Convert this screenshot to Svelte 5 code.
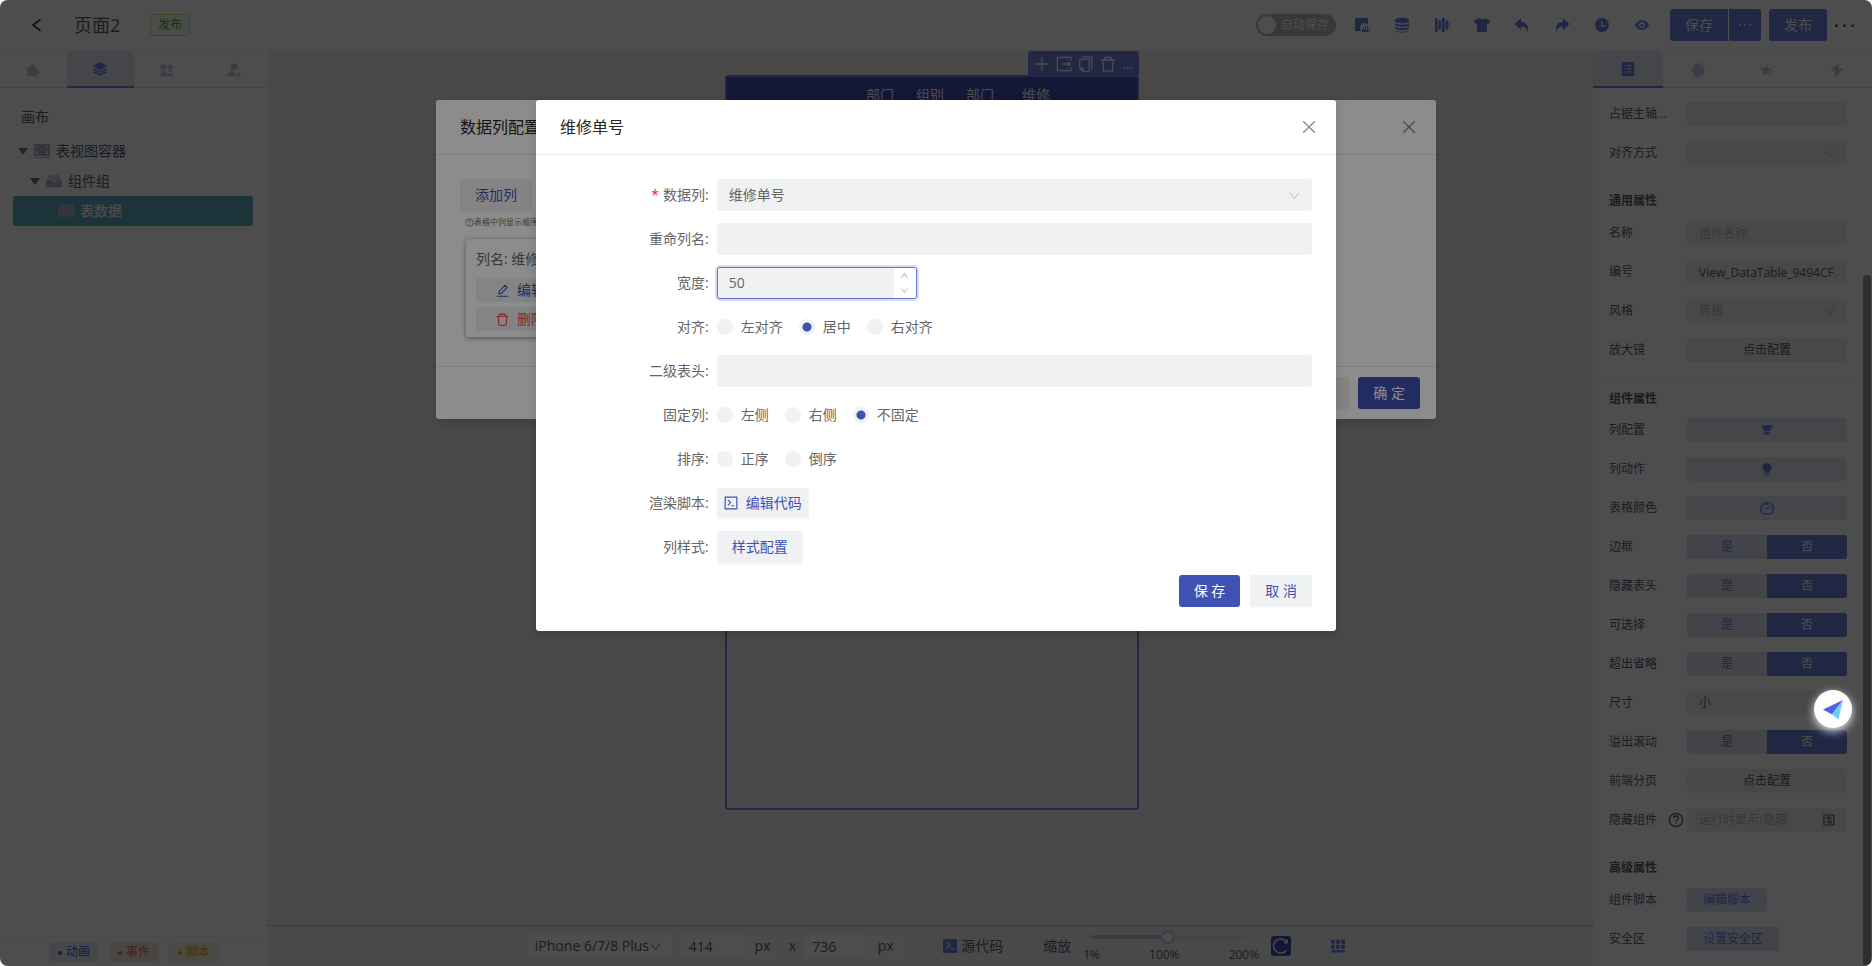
<script lang="ts">
  type Field = {
    id: string;
    label: string;
    kind: "text" | "select" | "config" | "icon" | "toggle" | "script" | "link";
    value?: string;
    placeholder?: string;
    icon?: string;
    help?: boolean;
  };

  const toolbarIcons = [
    { name: "page", title: "页面" },
    { name: "database", title: "数据源" },
    { name: "bars", title: "变量" },
    { name: "shirt", title: "主题" },
    { name: "undo", title: "撤销" },
    { name: "redo", title: "重做" },
    { name: "clock", title: "历史" },
    { name: "eye", title: "预览" },
  ];

  const layoutFields: Field[] = [
    { id: "grow", label: "占据主轴...", kind: "text", value: "" },
    { id: "align-self", label: "对齐方式", kind: "select", value: "" },
  ];

  const commonFields: Field[] = [
    { id: "name", label: "名称", kind: "text", value: "", placeholder: "组件名称" },
    { id: "code", label: "编号", kind: "text", value: "View_DataTable_9494CFBC" },
    { id: "theme", label: "风格", kind: "select", value: "", placeholder: "风格" },
    { id: "zoom", label: "放大镜", kind: "config", value: "点击配置" },
  ];

  const componentFields: Field[] = [
    { id: "columns", label: "列配置", kind: "icon", icon: "funnel" },
    { id: "actions", label: "列动作", kind: "icon", icon: "bulb" },
    { id: "colors", label: "表格颜色", kind: "icon", icon: "gauge" },
    { id: "border", label: "边框", kind: "toggle" },
    { id: "hide-head", label: "隐藏表头", kind: "toggle" },
    { id: "selectable", label: "可选择", kind: "toggle" },
    { id: "ellipsis", label: "超出省略", kind: "toggle" },
    { id: "size", label: "尺寸", kind: "select", value: "小" },
    { id: "scroll", label: "溢出滚动", kind: "toggle" },
    { id: "paging", label: "前端分页", kind: "config", value: "点击配置" },
    { id: "hidden", label: "隐藏组件", kind: "script", value: "", placeholder: "运行时显示/隐藏", help: true },
  ];

  const advancedFields: Field[] = [
    { id: "script", label: "组件脚本", kind: "link", value: "编辑脚本" },
    { id: "safe-area", label: "安全区", kind: "link", value: "设置安全区" },
  ];

  const radioRows = {
    align: ["左对齐", "居中", "右对齐"],
    fixed: ["左侧", "右侧", "不固定"],
    sort: ["正序", "倒序"],
  };

  let width = $state(50);
  let scale = $state(100);
  let align = $state("居中");
  let fixed = $state("不固定");
  let sort = $state("");
</script>

{#snippet icon(name: string, size = 18)}
  <svg width={size} height={size} viewBox="0 0 18 18" fill="currentColor" stroke="none" aria-hidden="true">
    {#if name === "page"}
      <path d="M2 2h13v6.500a4 4 0 0 0-6.500 6.500H2z" />
      <path d="M9 16c0-3 1-5 2-5v3h1V9.500h1V14h1v-4h1v4h1v-3c1 1 1 5-1 5z" />
    {:else if name === "database"}
      <path d="M2 4c0-3 14-3 14 0v1c0 3-14 3-14 0zM2 7c2 2.400 12 2.400 14 0v1.500c0 3-14 3-14 0zM2 10.500c2 2.400 12 2.400 14 0V12c0 3-14 3-14 0zM2 14c2 2.400 12 2.400 14 0-1 3.400-13 3.400-14 0z" />
    {:else if name === "bars"}
      <path d="M2 2h2.600v14H2zM5.500 4.500h2.600v9H5.500zM9 2h2.600v14H9zM12.500 4.500h2.600v9h-2.600zM15.500 7h1v4h-1z" />
    {:else if name === "shirt"}
      <path d="M6 2c1 1.800 5 1.800 6 0l5 2.500-1.500 4L14 8v8H4V8l-1.500.5L1 4.500z" />
    {:else if name === "undo"}
      <path d="M8 2v4c6 0 8.500 5 6.500 10C14 12 12 10.500 8 10.500V14L1.500 8z" />
    {:else if name === "redo"}
      <path d="M10 2v4C4 6 1.500 11 3.500 16c.5-4 2.500-5.500 6.500-5.500V14l6.500-6z" />
    {:else if name === "clock"}
      <path fill-rule="evenodd" d="M9 2a7 7 0 1 0 0 14A7 7 0 0 0 9 2zm-1 3h1.500v4.200h3v1.500H8z" />
    {:else if name === "eye"}
      <path fill-rule="evenodd" d="M2 9C5.500 2.500 12.500 2.500 16 9 12.500 15.500 5.500 15.500 2 9zM9 6a3 3 0 1 0 0 6 3 3 0 0 0 0-6z" />
      <circle cx="9" cy="9" r="1.600" />
    {:else if name === "puzzle"}
      <path d="M1 6h4.500a2.900 2.900 0 1 1 5 0H14v3.500a2.400 2.400 0 1 1 0 4.500v3H1v-3.500a2 2 0 1 0 0-4z" />
    {:else if name === "layers"}
      <path d="M9 0l9 5-9 5.500L0 5z" />
      <path fill="none" stroke="currentColor" stroke-width="1.900" d="M.5 8.500L9 13.500l8.500-5M.5 12L9 17l8.500-5" />
    {:else if name === "blocks"}
      <path d="M1 2h7.500v6.500H1zM1 10c4.500 0 7 3.500 16 5v2H1zM9.500 10H17v3.500c-3.500-.6-5.500-1.800-7.500-3.500z" />
      <circle cx="13.300" cy="5.300" r="3.600" />
    {:else if name === "user"}
      <circle cx="9" cy="4.800" r="4.600" />
      <path d="M0 17.500C0 13 2 11 5.500 11h3.500l2 3-2 3.500zM13 11l5 4-2 2.500h-4.500l2-3z" />
    {:else if name === "form"}
      <path fill-rule="evenodd" d="M3 0h12a2 2 0 0 1 2 2v14a2 2 0 0 1-2 2H3a2 2 0 0 1-2-2V2a2 2 0 0 1 2-2zm1.500 4v1.500H6V4zm3 0v1.500h6V4zm-3 4v1.500H6V8zm3 0v1.500h6V8zm-3 4v1.500H6V12zm3 0v1.500h6V12z" />
    {:else if name === "palette"}
      <path d="M3 3l2 1 1-3c3-1 6-1 8 1 2 1.500 3.500 4 3.500 7 0 5-4 9-8.500 9-4 0-6-2-7-4l2-1-3-2c-.5-2 0-3 .5-4l2 0z" />
      <path fill="none" stroke="#fff" stroke-width="1.300" stroke-dasharray="1.300 2" d="M11 3.500c4.500 2 5 8 1 11.500" />
    {:else if name === "star"}
      <path d="M8 1l2.200 5.500H16l-4.500 3.700 1.700 6L8 13l-5.200 3.200 1.700-6L0 6.500h5.800z" />
      <path d="M15.500 3.500H17v2h-1.500zM15 9h2v2h-2zM15.500 14H17v2h-1.500z" />
    {:else if name === "bolt"}
      <path d="M11 0L0 10.500h6.500L6 18 18 7h-7z" />
    {:else if name === "frame"}
      <path fill-rule="evenodd" d="M0 1h18v13.500H0zm2 2v3l3-3zm14 0h-3l3 3zM2 12.500h3l-3-3zm14 0v-3l-3 3zM0 15.800h18V17H0z" />
    {:else if name === "box"}
      <path d="M4 2h10l4 7H0z" opacity=".6" />
      <path fill-rule="evenodd" d="M0 8.500h7c0 3 4 3 4 0h7V16H0z" />
    {:else if name === "funnel"}
      <path d="M0 2h18l-5 9H5zM5 12.500h8V16H5z" />
    {:else if name === "bulb"}
      <path d="M9 0a6.800 6.800 0 0 0-4 12.300V14.500h8v-2.200A6.800 6.800 0 0 0 9 0zM5 16h8v2H5z" />
    {:else if name === "gauge"}
      <path fill="none" stroke="currentColor" stroke-width="1.600" d="M4 16.500a8.200 8.200 0 1 1 10 0zM8.500 10.500l3.500-4M3.500 9.500H5M9 3v2M4.800 5.300l1.200 1M13 9.500h1.500" />
    {:else if name === "calc"}
      <path fill="none" stroke="currentColor" stroke-width="1.800" d="M1.500 1.500h15v15h-15zM4.500 6h4M6.500 4v4M10.500 6H14M4.500 12h4M10.500 10.800H14M10.500 13.500H14M9 3v12" />
    {:else if name === "help"}
      <circle cx="9" cy="9" r="7.500" fill="none" stroke="currentColor" stroke-width="1.500" />
      <path fill="none" stroke="currentColor" stroke-width="1.500" d="M6.500 7c0-3.300 5-3.300 5 0 0 1.700-2.500 1.800-2.500 4M9 12.300v1.600" />
    {:else if name === "down"}
      <path fill="none" stroke="currentColor" stroke-width="1.600" d="M1.500 4l7.500 10L16.500 4" />
    {:else if name === "up"}
      <path fill="none" stroke="currentColor" stroke-width="2" d="M2 14l7-10 7 10" />
    {:else if name === "close"}
      <path fill="none" stroke="currentColor" stroke-width="1.800" d="M1.500 1.500l15 15M16.500 1.500l-15 15" />
    {:else if name === "back"}
      <path fill="none" stroke="currentColor" stroke-width="2.200" d="M13.500 2L4 9l9.500 7.500" />
    {:else if name === "dots"}
      <path d="M0 8h2.500v2.500H0zM7.700 8h2.500v2.500H7.700zM15.500 8H18v2.500h-2.500z" />
    {:else if name === "plus"}
      <path fill="none" stroke="currentColor" stroke-width="1.500" d="M9 1v16M1 9h16" />
    {:else if name === "export"}
      <path fill="none" stroke="currentColor" stroke-width="1.500" d="M17 5V1.500H1.500v15H17V13M7 9h9M13 6.500L16 9l-3 2.500" />
    {:else if name === "copy"}
      <path fill="none" stroke="currentColor" stroke-width="1.400" d="M2 3.500h10.500v14H5.500L2 14zM2 13.500h4v4M5 1h10.500v14" />
    {:else if name === "trash"}
      <path fill="none" stroke="currentColor" stroke-width="1.500" d="M1 4.500h16M5.500 4V1.500h7V4M3 4.500l1 12.500h10l1-12.500" />
    {:else if name === "edit"}
      <path fill="none" stroke="currentColor" stroke-width="1.500" d="M1 17h16M4 13.500l.6-3.500L12.500 1.800l3 3L7.500 13z" />
    {:else if name === "code"}
      <path fill="none" stroke="currentColor" stroke-width="1.500" d="M1.500 1.500h15v15h-15zM5 5l3.500 3.500L5 12M9.500 12.500H13" />
    {:else if name === "terminal"}
      <path fill-rule="evenodd" d="M0 0h18v18H0zm4 4.500L7.500 8 4 11.500l1.300 1.200L10 8 5.300 3.300zM10 12v1.600h5V12z" />
    {:else if name === "grid"}
      <path d="M0 1h5v5H0zM6.500 1h5v5h-5zM13 1h5v5h-5zM0 7.500h5v5H0zM6.500 7.500h5v5h-5zM13 7.500h5v5h-5zM0 14h18v3.500H0z" />
    {:else if name === "refresh"}
      <path fill="none" stroke="currentColor" stroke-width="1.600" d="M15 4.200a8 8 0 1 0 0 9.600M15.800 1.500v3.800H12.500" />
    {/if}
  </svg>
{/snippet}

{#snippet fieldRow(f: Field)}
  <div class="field">
    <div class="field-label">
      {#if f.kind === "text" || f.kind === "select" || f.kind === "script"}
        <label for={f.id}>{f.label}</label>
      {:else}
        <span id="{f.id}-label">{f.label}</span>
      {/if}
      {#if f.help}{@render icon("help", 16)}{/if}
    </div>
    {#if f.kind === "text"}
      <input id={f.id} class="control" type="text" value={f.value} placeholder={f.placeholder} />
    {:else if f.kind === "select"}
      <div class="select">
        <select id={f.id} class="control" class:empty={!f.value}>
          <option>{f.value || f.placeholder || ""}</option>
        </select>
        {@render icon("down", 11)}
      </div>
    {:else if f.kind === "config"}
      <button class="control centered" aria-labelledby="{f.id}-label">{f.value}</button>
    {:else if f.kind === "icon"}
      <button class="control icon-control" aria-labelledby="{f.id}-label">{@render icon(f.icon ?? "", f.icon === "gauge" ? 14 : 12)}</button>
    {:else if f.kind === "toggle"}
      <div class="toggle" role="radiogroup" aria-labelledby="{f.id}-label">
        <label><input type="radio" name={f.id} value="yes" />是</label>
        <label><input type="radio" name={f.id} value="no" checked />否</label>
      </div>
    {:else if f.kind === "script"}
      <div class="control with-suffix">
        <input id={f.id} type="text" placeholder={f.placeholder} />
        {@render icon("calc", 12)}
      </div>
    {:else}
      <button class="control link-control" aria-labelledby="{f.id}-label">{f.value}</button>
    {/if}
  </div>
{/snippet}

<div class="app">
  <header class="topbar">
    <button class="plain back" aria-label="返回">{@render icon("back", 14)}</button>
    <h1>页面2</h1>
    <span class="status">发布</span>
    <div class="tools">
      <label class="switch"><input type="checkbox" /><i></i>自动保存</label>
      <div class="tool-icons">
        {#each toolbarIcons as t}
          <button class="plain" aria-label={t.title}>{@render icon(t.name)}</button>
        {/each}
      </div>
      <div class="split">
        <button class="solid">保存</button>
        <button class="solid more" aria-label="更多保存">{@render icon("dots", 12)}</button>
      </div>
      <button class="solid">发布</button>
      <button class="plain" aria-label="更多">{@render icon("dots", 19)}</button>
    </div>
  </header>

  <div class="workspace">
    <aside class="left">
      <nav class="tabs">
        {#each ["puzzle", "layers", "blocks", "user"] as name, i}
          <button class="tab" class:active={i === 1} aria-label={name}>{@render icon(name, 14)}</button>
        {/each}
      </nav>
      <div class="tree">
        <h2>画布</h2>
        <div class="node"><b class="caret"></b>{@render icon("frame", 16)}<span>表视图容器</span></div>
        <div class="node level-1"><b class="caret"></b>{@render icon("box", 16)}<span>组件组</span></div>
        <div class="node level-2 selected">{@render icon("frame", 16)}<span>表数据</span></div>
      </div>
      <footer class="legend">
        <span class="blue">动画</span>
        <span class="orange">事件</span>
        <span class="yellow">脚本</span>
      </footer>
    </aside>

    <main class="canvas">
      <div class="stage">
        <div class="device">
          <div class="device-tools">
            {#each ["plus", "export", "copy", "trash"] as name}
              <button class="plain" aria-label={name}>{@render icon(name, 16)}</button>
            {/each}
            <button class="plain ellipsis">...</button>
          </div>
          <div class="screen">
            <table>
              <thead>
                <tr><th class="wide"></th><th>部门</th><th>组别</th><th>部门</th><th class="mid">维修</th><th class="rest"></th></tr>
              </thead>
            </table>
          </div>
        </div>
      </div>

      <footer class="viewbar">
        <div class="select device-select">
          <select aria-label="设备"><option>iPhone 6/7/8 Plus</option></select>
          {@render icon("down", 11)}
        </div>
        <label class="size"><input type="text" value="414" /><span>px</span></label>
        <span>x</span>
        <label class="size"><input type="text" value="736" /><span>px</span></label>
        <button class="plain source">{@render icon("terminal", 14)}源代码</button>
        <label class="zoom-label" for="scale">缩放</label>
        <div class="slider">
          <input id="scale" type="range" min="1" max="200" bind:value={scale} />
          <div class="marks"><span>1%</span><span>100%</span><span>200%</span></div>
        </div>
        <button class="reset" aria-label="重置">{@render icon("refresh", 16)}</button>
        <button class="plain grid-button" aria-label="网格">{@render icon("grid", 14)}</button>
      </footer>
    </main>

    <aside class="right">
      <nav class="tabs">
        {#each ["form", "palette", "star", "bolt"] as name, i}
          <button class="tab" class:active={i === 0} aria-label={name}>{@render icon(name, 14)}</button>
        {/each}
      </nav>
      <div class="props">
        <div class="fields">
          {#each layoutFields as f}{@render fieldRow(f)}{/each}
          <h3>通用属性</h3>
          {#each commonFields as f}{@render fieldRow(f)}{/each}
          <h3 class="divided">组件属性</h3>
          {#each componentFields as f}{@render fieldRow(f)}{/each}
          <h3>高级属性</h3>
          {#each advancedFields as f}{@render fieldRow(f)}{/each}
        </div>
        <div class="scrollbar"><i></i></div>
      </div>
    </aside>
  </div>

  <div class="mask">
    <section class="modal list-modal" role="dialog" aria-label="数据列配置">
      <header>
        <h2>数据列配置</h2>
        <button class="plain" aria-label="关闭">{@render icon("close", 14)}</button>
      </header>
      <div class="modal-body">
        <button class="btn">添加列</button>
        <p class="hint">{@render icon("help", 9)}表格中列显示顺序</p>
        <div class="card">
          <p>列名: 维修单号</p>
          <button class="edit">{@render icon("edit", 13)}编辑</button>
          <button class="remove">{@render icon("trash", 13)}删除</button>
        </div>
      </div>
      <footer>
        <button class="btn">取 消</button>
        <button class="btn primary">确 定</button>
      </footer>
    </section>
  </div>

  <div class="mask">
    <section class="modal column-modal" role="dialog" aria-label="维修单号">
      <header>
        <h2>维修单号</h2>
        <button class="plain" aria-label="关闭">{@render icon("close", 14)}</button>
      </header>
      <form class="form">
        <label class="required" for="col-field">数据列:</label>
        <div class="select">
          <select id="col-field" class="input"><option>维修单号</option></select>
          {@render icon("down", 11)}
        </div>

        <label for="col-rename">重命列名:</label>
        <input id="col-rename" class="input" type="text" />

        <label for="col-width">宽度:</label>
        <div class="number">
          <input id="col-width" type="number" bind:value={width} />
          <div class="steps">
            <button type="button" aria-label="增加" onclick={() => (width += 1)}>{@render icon("up", 7)}</button>
            <button type="button" aria-label="减少" onclick={() => (width -= 1)}>{@render icon("down", 7)}</button>
          </div>
        </div>

        <span>对齐:</span>
        <div class="radios">
          {#each radioRows.align as option}
            <label><input type="radio" name="align" value={option} bind:group={align} />{option}</label>
          {/each}
        </div>

        <label for="col-second">二级表头:</label>
        <input id="col-second" class="input" type="text" />

        <span>固定列:</span>
        <div class="radios">
          {#each radioRows.fixed as option}
            <label><input type="radio" name="fixed" value={option} bind:group={fixed} />{option}</label>
          {/each}
        </div>

        <span>排序:</span>
        <div class="radios">
          {#each radioRows.sort as option}
            <label><input type="radio" name="sort" value={option} bind:group={sort} />{option}</label>
          {/each}
        </div>

        <span>渲染脚本:</span>
        <button type="button" class="btn code">{@render icon("code", 14)}编辑代码</button>

        <span>列样式:</span>
        <button type="button" class="btn">样式配置</button>

        <div class="actions">
          <button type="button" class="btn primary">保 存</button>
          <button type="button" class="btn">取 消</button>
        </div>
      </form>
    </section>
  </div>

  <button class="assistant" aria-label="助手">
    <svg width="22" height="22" viewBox="0 0 22 22" aria-hidden="true">
      <path fill="#5262e8" d="M1 11.500L21 2 10 16.500z" />
      <path fill="#6fd0ee" d="M21 2L10 16.500l6.500 5z" />
    </svg>
  </button>
</div>

<style>
:global(body) {
  margin: 0;
  background: #fff;
}

.app {
  --blue: #3f51b5;
  --soft-blue: #6a82e0;
  position: relative;
  display: flex;
  flex-direction: column;
  height: 100vh;
  overflow: hidden;
  border-radius: 8px;
  background: #f5f5f6;
  color: #5c5e72;
  font: 14px/22px "Open Sans", "Noto Sans CJK SC", sans-serif;
}

.app * {
  box-sizing: border-box;
}

button, input, select {
  margin: 0;
  padding: 0;
  border: 0;
  outline: 0;
  background: none;
  color: inherit;
  font: inherit;
}

select {
  appearance: none;
}

h1, h2, h3, p {
  margin: 0;
  font-weight: 400;
}

svg {
  display: block;
  flex: none;
}

.plain {
  display: flex;
  align-items: center;
}

/* top bar */
.topbar {
  display: flex;
  align-items: center;
  flex: none;
  height: 51px;
  padding: 0 18px 0 30px;
  border-bottom: 1px solid #ececee;
  background: #fff;
}

.back {
  color: #33364d;
}

.topbar h1 {
  margin-left: 30px;
  font-size: 18px;
}

.status {
  margin-left: 30px;
  padding: 0 7px;
  border: 1px solid #b7eb8f;
  border-radius: 3px;
  background: #f6ffed;
  color: #46b01a;
  font-size: 12px;
  line-height: 20px;
}

.tools {
  display: flex;
  align-items: center;
  gap: 8px;
  margin-left: auto;
}

.switch {
  display: flex;
  align-items: center;
  gap: 5px;
  width: 80px;
  height: 22px;
  padding: 0 2px;
  border-radius: 11px;
  background: #bcbcbc;
  color: #fff;
  font-size: 12px;
}

.switch input {
  display: none;
}

.switch i {
  width: 18px;
  height: 18px;
  border-radius: 9px;
  background: #fff;
}

.tool-icons {
  display: flex;
  gap: 22px;
  margin: 0 11px 0 9px;
  color: var(--soft-blue);
}

.split {
  display: flex;
  gap: 1px;
}

.solid {
  width: 58px;
  height: 32px;
  border-radius: 3px;
  background: var(--soft-blue);
  color: #fff;
}

.split .solid {
  border-radius: 3px 0 0 3px;
}

.split .more {
  display: grid;
  place-items: center;
  width: 32px;
  border-radius: 0 3px 3px 0;
}

/* side panels */
.workspace {
  display: flex;
  flex: 1;
  min-height: 0;
}

.left, .right {
  display: flex;
  flex-direction: column;
  flex: none;
  width: 267px;
  background: #fff;
}

.right {
  width: 279px;
}

.tabs {
  display: flex;
  flex: none;
  height: 37px;
  border-bottom: 1px solid #e6e6ea;
}

.tab {
  display: grid;
  place-items: center;
  flex: 1;
  height: 37px;
  color: #c6cae4;
}

.tab.active {
  border-bottom: 2px solid var(--soft-blue);
  border-radius: 4px 4px 0 0;
  background: #e6e9f8;
  color: var(--soft-blue);
}

.tree {
  flex: 1;
  padding: 18px 14px 0 13px;
}

.tree h2 {
  margin: 0 0 8px 8px;
  font-size: 14px;
}

.node {
  display: flex;
  align-items: center;
  gap: 6px;
  height: 30px;
  padding-left: 5px;
}

.node svg {
  color: #b0b3cc;
}

.level-1 {
  padding-left: 17px;
}

.level-2 {
  padding-left: 45px;
}

.selected {
  border-radius: 3px;
  background: #5fabc0;
  color: #fff;
  font-weight: 500;
}

.caret {
  border: 5px solid transparent;
  border-top: 7px solid #777;
  border-bottom: 0;
}

.legend {
  display: flex;
  gap: 10px;
  height: 29px;
  padding: 4px 0 0 49px;
  border-top: 1px solid #f2f2f4;
}

.legend span {
  width: 50px;
  height: 20px;
  border-radius: 3px;
  font-size: 12px;
  line-height: 20px;
  text-align: center;
}

.legend span::before {
  content: "";
  display: inline-block;
  width: 4px;
  height: 4px;
  margin-right: 4px;
  border-radius: 2px;
  background: currentColor;
  vertical-align: middle;
}

.blue {
  background: #ebecfa;
  color: #4360e8;
}

.orange {
  background: #faeae3;
  color: #e8774a;
}

.yellow {
  background: #faf5e2;
  color: #dcae1c;
}

/* canvas */
.canvas {
  display: flex;
  flex-direction: column;
  flex: 1;
  min-width: 0;
}

.stage {
  display: flex;
  flex: 1;
  justify-content: center;
  padding-left: 4px;
}

.device {
  display: flex;
  flex-direction: column;
  width: 414px;
}

.device-tools {
  display: flex;
  align-items: center;
  align-self: flex-end;
  gap: 6px;
  width: 111px;
  height: 24px;
  padding: 2px 0 0 6px;
  border-radius: 3px 3px 0 0;
  background: #7488de;
  color: #fff;
}

.device-tools .ellipsis {
  align-self: flex-end;
}

.screen {
  height: 735px;
  border: 2px solid #7488de;
  border-radius: 3px;
}

.screen table {
  width: 100%;
  border-collapse: collapse;
  table-layout: fixed;
  background: var(--blue);
  color: #fff;
}

.screen th {
  width: 50px;
  height: 36px;
  padding: 0;
  font-weight: 400;
}

.screen .wide {
  width: 128px;
}

.screen .mid {
  width: 62px;
}

.screen .rest {
  width: auto;
}

.viewbar {
  display: flex;
  align-items: center;
  justify-content: center;
  gap: 8px;
  height: 41px;
  padding-left: 12px;
  border-top: 1px solid #c4c4c8;
}

.select {
  position: relative;
  display: flex;
  align-items: center;
}

.select svg {
  position: absolute;
  right: 12px;
  color: #b4b4bc;
  pointer-events: none;
}

.device-select select {
  width: 146px;
  height: 24px;
  padding-left: 8px;
  border-radius: 3px;
  background: #fff;
}

.device-select svg {
  color: #666;
}

.size {
  display: flex;
  align-items: center;
  width: 100px;
  height: 24px;
  border-radius: 3px;
  background: #fafafa;
}

.size input {
  width: 63px;
  height: 24px;
  padding-left: 8px;
  background: #fff;
}

.size span {
  flex: 1;
  text-align: center;
}

.source {
  gap: 4px;
  margin-left: 31px;
}

.source svg {
  color: var(--soft-blue);
}

.zoom-label {
  margin-left: 32px;
}

.slider {
  width: 154px;
  height: 32px;
  margin: 0 18px 0 12px;
}

.slider input {
  display: block;
  width: 100%;
  height: 14px;
  appearance: none;
}

.slider input::-webkit-slider-runnable-track {
  height: 4px;
  border-radius: 2px;
  background: linear-gradient(90deg, #c3cae6 50%, #e4e4e8 50%);
}

.slider input::-webkit-slider-thumb {
  width: 14px;
  height: 14px;
  margin-top: -5px;
  border: 2px solid #c3cae6;
  border-radius: 7px;
  background: #fff;
  appearance: none;
}

.marks {
  display: flex;
  justify-content: space-between;
  margin: 3px -14px 0 -8px;
  font-size: 12px;
  line-height: 16px;
}

.reset {
  display: grid;
  place-items: center;
  width: 20px;
  height: 20px;
  border-radius: 3px;
  background: var(--blue);
  color: #fff;
}

.grid-button {
  margin-left: 32px;
  color: var(--soft-blue);
}

/* property fields */
.props {
  display: flex;
  flex: 1;
  min-height: 0;
}

.fields {
  flex: 1;
  padding-top: 14px;
  overflow: hidden;
  font-size: 12px;
}

.scrollbar {
  display: flex;
  width: 9px;
  padding: 187px 1px 0 0;
}

.scrollbar i {
  flex: 1;
  border-radius: 4px;
  background: #9c9c9c;
}

.fields h3 {
  height: 41px;
  padding-left: 16px;
  font-size: 12px;
  font-weight: 600;
  line-height: 42px;
}

.fields .divided {
  border-top: 1px solid #ececee;
}

.field {
  display: flex;
  height: 24px;
  margin: 0 16px 15px;
}

.field-label {
  display: flex;
  align-items: center;
  justify-content: space-between;
  width: 78px;
  padding-right: 3px;
}

.control {
  display: block;
  width: 160px;
  height: 24px;
  padding: 0 12px;
  border-radius: 3px;
  background: #f1f1f3;
}

.control.empty, .control::placeholder, .with-suffix input::placeholder {
  color: #b4b4ba;
  opacity: 1;
}

.centered {
  text-align: center;
}

.icon-control {
  display: grid;
  place-items: center;
  background: #e7e9f3;
  color: var(--soft-blue);
}

.with-suffix {
  display: flex;
  align-items: center;
  justify-content: space-between;
}

.with-suffix input {
  width: 110px;
}

.link-control {
  width: auto;
  padding: 0 16px;
  background: #dfe3f6;
  color: var(--soft-blue);
}

.toggle {
  display: grid;
  grid-template-columns: 1fr 1fr;
  width: 160px;
  border-radius: 3px;
  overflow: hidden;
  background: #e1e4f2;
  color: var(--soft-blue);
  line-height: 24px;
  text-align: center;
}

.toggle input {
  position: absolute;
  opacity: 0;
}

.toggle label:has(input:checked) {
  background: var(--soft-blue);
  color: #fff;
}

/* dialogs */
.mask {
  position: absolute;
  inset: 0;
  padding: 100px 16px 0;
  background: rgba(0, 0, 0, .45);
}

.modal {
  max-width: 1000px;
  margin: 0 auto;
  border-radius: 3px;
  background: #fff;
  box-shadow: 0 4px 12px rgba(0, 0, 0, .15);
  color: #666;
}

.column-modal {
  max-width: 800px;
}

.modal header {
  display: flex;
  align-items: center;
  justify-content: space-between;
  height: 55px;
  padding: 0 20px 0 24px;
  border-bottom: 1px solid #e8e8e8;
}

.modal h2 {
  color: #262626;
  font-size: 16px;
}

.modal header .plain {
  color: #8c8c8c;
}

.btn {
  height: 32px;
  padding: 0 15px;
  border-radius: 3px;
  background: #f0f1f3;
  box-shadow: 0 2px 0 rgba(0, 0, 0, .02);
  color: var(--blue);
}

.primary {
  background: var(--blue);
  color: #fff;
}

.modal-body {
  padding: 24px 24px 29px;
}

.hint {
  display: flex;
  align-items: center;
  margin: 3px 0 9px 5px;
  font-size: 8px;
  line-height: 16px;
}

.card {
  width: 200px;
  margin-left: 6px;
  padding: 9px 9px 6px 10px;
  border-radius: 3px;
  box-shadow: 0 1px 5px rgba(0, 0, 0, .45);
}

.card p {
  margin-bottom: 8px;
}

.card button {
  display: flex;
  align-items: center;
  gap: 8px;
  width: 100%;
  height: 24px;
  padding-left: 20px;
  border-radius: 3px;
  background: #f0f1f3;
  color: var(--blue);
}

.card .remove {
  margin-top: 5px;
  color: #f5444c;
}

.modal footer {
  display: flex;
  justify-content: flex-end;
  gap: 8px;
  padding: 10px 16px;
  border-top: 1px solid #e8e8e8;
}

.form {
  display: grid;
  grid-template-columns: 5fr 19fr;
  grid-auto-rows: 32px;
  align-items: center;
  justify-items: start;
  gap: 12px 0;
  padding: 24px;
}

.form > label, .form > span {
  justify-self: end;
  padding-right: 8px;
}

.form .required::before {
  content: "*";
  margin-right: 4px;
  color: #f5222d;
}

.form .select {
  width: 100%;
}

.input {
  width: 100%;
  height: 32px;
  padding: 0 12px;
  border-radius: 3px;
  background: #f0f1f3;
}

.number {
  display: flex;
  width: 200px;
  height: 32px;
  overflow: hidden;
  border: 1px solid #6573c9;
  border-radius: 3px;
  background: #f0f1f3;
  box-shadow: 0 0 0 2px rgba(63, 81, 181, .2);
}

.number input {
  flex: 1;
  min-width: 0;
  padding-left: 11px;
  appearance: textfield;
}

.number input::-webkit-inner-spin-button {
  appearance: none;
}

.steps {
  display: grid;
  width: 22px;
  background: #fff;
  color: #8c8c8c;
}

.steps button {
  display: grid;
  place-items: center;
}

.radios {
  display: flex;
  gap: 16px;
}

.radios label {
  display: flex;
  align-items: center;
  gap: 8px;
}

.radios input {
  width: 16px;
  height: 16px;
  border-radius: 8px;
  background: #f0f1f3;
  appearance: none;
}

.radios input:checked {
  background: radial-gradient(circle, var(--blue) 4px, #f0f1f3 5px);
}

.code {
  display: flex;
  align-items: center;
  gap: 8px;
  height: 30px;
  padding: 0 7px;
}

.actions {
  display: flex;
  grid-column: 1 / -1;
  justify-self: end;
  gap: 10px;
}

.assistant {
  position: absolute;
  right: 20px;
  top: 690px;
  display: grid;
  place-items: center;
  width: 38px;
  height: 38px;
  border-radius: 19px;
  background: #fff;
  box-shadow: 0 3px 10px rgba(255, 255, 255, .9);
}
</style>
